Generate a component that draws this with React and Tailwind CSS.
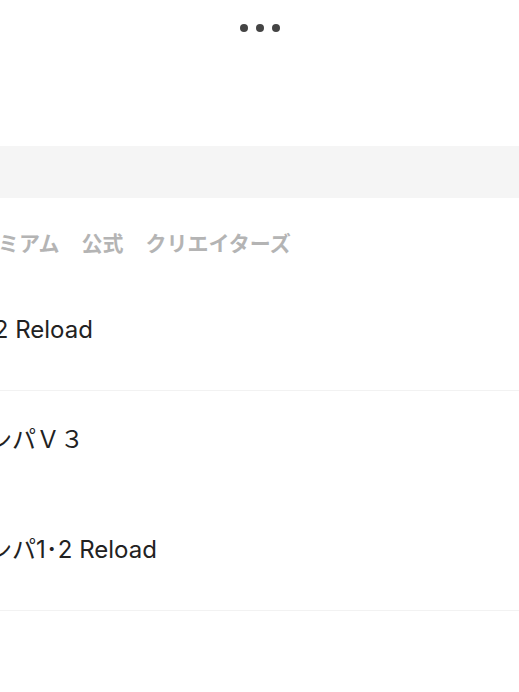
export default function App() {
  const rows = [
    { title: 'ダンガンロンパ1･2 Reload', shift: '-ml-[196px]', line: true },
    { title: 'ダンガンロンパＶ３', shift: '-ml-[132px]', line: false },
    { title: 'ダンガンロンパ1･2 Reload', shift: '-ml-[132px]', line: true },
  ]

  return (
    <div className="w-full min-h-[692px] overflow-hidden bg-white font-['Inter','Noto_Sans_CJK_JP',sans-serif]">
      {/* header menu */}
      <div className="h-14 flex items-center justify-center gap-2">
        <span className="w-2 h-2 rounded-full bg-[#444]" />
        <span className="w-2 h-2 rounded-full bg-[#444]" />
        <span className="w-2 h-2 rounded-full bg-[#444]" />
      </div>

      {/* search bar */}
      <div className="mt-[90px] h-[52px] bg-[#f5f5f5]" />

      {/* tabs */}
      <div className="mt-[35px] -ml-[44px] flex gap-[22px] whitespace-nowrap text-[21px] leading-[21px] font-bold text-[#b4b4b4]">
        <span>プレミアム</span>
        <span>公式</span>
        <span>クリエイターズ</span>
      </div>

      {/* list */}
      <ul className="mt-[27px]">
        {rows.map((row, i) => (
          <li
            key={i}
            className={`h-[110px] flex items-center pb-3 ${row.line ? 'border-b border-[#f2f2f2]' : ''}`}
          >
            <span className={`${row.shift} whitespace-nowrap text-[24px] leading-6 text-[#222]`}>
              {row.title}
            </span>
          </li>
        ))}
      </ul>
    </div>
  )
}
